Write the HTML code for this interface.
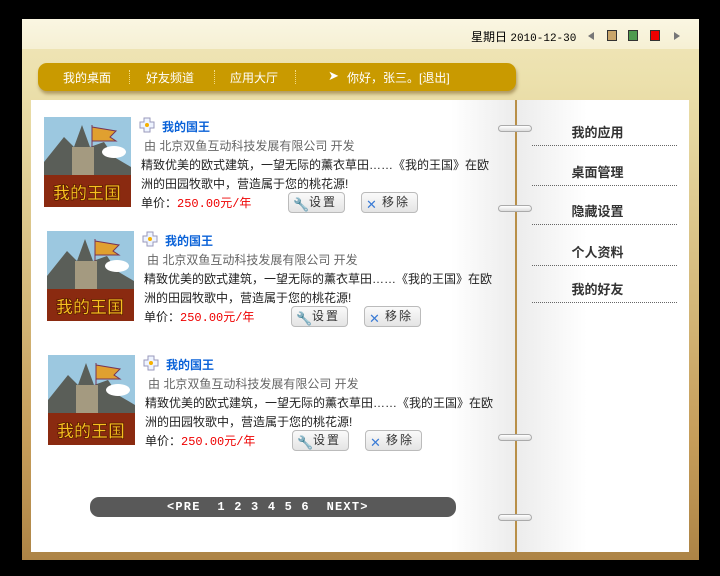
<!DOCTYPE html>
<html><head><meta charset="utf-8"><style>
*{margin:0;padding:0;box-sizing:border-box}
body{width:720px;height:576px;background:#000;position:relative;overflow:hidden;font-family:"Liberation Sans","Noto Sans CJK SC",sans-serif;font-size:12px}
.frame{position:absolute;left:22px;top:19px;width:677px;height:541px;background:linear-gradient(#f0e6bb 0,#ece1ad 60px,#dcc78c 200px,#c69d5a 420px,#ad8446 541px)}
.top{position:absolute;left:0;top:0;width:677px;height:30px;background:linear-gradient(#faf6e2,#f6f0d4)}
.date{position:absolute;left:449px;top:9px;font-size:12px;color:#000}
.date span{font-family:"Liberation Mono",monospace;font-size:11px}
.sq{position:absolute;top:11px;width:10px;height:11px;border:1px solid #333}
.tri{position:absolute;top:13px;width:0;height:0;border-top:4px solid transparent;border-bottom:4px solid transparent}
.nav{position:absolute;left:16px;top:44px;width:478px;height:28px;background:#c99a00;border-radius:9px;box-shadow:1px 3px 3px rgba(120,90,30,.5);color:#fff}
.nav span{position:absolute;top:6px;font-size:12px}
.nav i{position:absolute;top:7px;height:14px;border-left:1px dotted #f3dc86}
.lp{position:absolute;left:9px;top:81px;width:484px;height:452px;background:linear-gradient(90deg,#fff 0,#fff 420px,#ececec 484px)}
.bind{position:absolute;left:493px;top:81px;width:2px;height:452px;background:#b88f48}
.rp{position:absolute;left:495px;top:81px;width:172px;height:452px;background:linear-gradient(90deg,#ececec 0,#fff 70px)}
.ring{position:absolute;left:476px;width:34px;height:7px;border:1px solid #aaa;border-radius:4px;background:linear-gradient(#fff,#ddd)}
.item{position:absolute}
.img{position:absolute;left:0;top:0;width:87px;height:90px}
.plus{position:absolute;left:95px;top:0;width:16px;height:16px}
.t{position:absolute;left:118px;top:1px;color:#0a62d8;font-weight:bold;font-size:12px;white-space:nowrap}
.by{position:absolute;left:100px;top:20px;color:#666;white-space:nowrap}
.d{position:absolute;left:97px;top:39px;width:355px;color:#222;line-height:19px}
.pr{position:absolute;left:97px;top:77px;color:#222;white-space:nowrap}
.pr b{font-weight:normal;color:#e00;font-family:"Liberation Mono",monospace}
.btn{position:absolute;top:75px;width:57px;height:21px;border:1px solid #bbb;border-radius:4px;background:linear-gradient(#fafafa,#e4e4e4);color:#333;font-size:12px;line-height:19px;padding-left:20px;letter-spacing:2px}
.btn em{position:absolute;left:4px;top:2px;font-style:normal;font-size:13px;letter-spacing:0}
.pg{position:absolute;left:68px;top:478px;width:366px;height:20px;background:#595959;border-radius:9px;color:#fff;font-family:"Liberation Mono",monospace;font-size:12px;line-height:20px;white-space:pre;padding-left:77px;letter-spacing:1.2px;font-weight:bold}
.m{position:absolute;left:510px;width:145px;text-align:center;color:#333;font-weight:bold;font-size:13px;border-bottom:1px dotted #666;height:24px;padding-right:14px}
</style></head><body>
<div class="frame">
 <div class="top">
  <div class="date">星期日 <span>2010-12-30</span></div>
  <div class="tri" style="left:566px;border-right:6px solid #777"></div>
  <div class="sq" style="left:585px;background:#c9a66b"></div>
  <div class="sq" style="left:606px;background:#4f9a4f"></div>
  <div class="sq" style="left:628px;background:#e00"></div>
  <div class="tri" style="left:652px;border-left:6px solid #777"></div>
 </div>
 <div class="nav">
  <span style="left:25px">我的桌面</span><i style="left:91px"></i>
  <span style="left:108px">好友频道</span><i style="left:176px"></i>
  <span style="left:192px">应用大厅</span><i style="left:257px"></i>
  <span style="left:290px;font-size:13px;top:5px">&#10148;</span>
  <span style="left:309px">你好，张三。[退出]</span>
 </div>
 <div class="lp"></div><div class="bind"></div><div class="rp"></div>
 <div class="ring" style="top:106px"></div><div class="ring" style="top:186px"></div>
 <div class="ring" style="top:415px"></div><div class="ring" style="top:495px"></div>

 <div class="m" style="top:103px">我的应用</div>
 <div class="m" style="top:143px">桌面管理</div>
 <div class="m" style="top:182px">隐藏设置</div>
 <div class="m" style="top:223px">个人资料</div>
 <div class="m" style="top:260px">我的好友</div>

 <div class="pg">&lt;PRE  1 2 3 4 5 6  NEXT&gt;</div>
</div>

<div class="item" style="left:44px;top:117px">
 <svg class="img" viewBox="0 0 87 90"><rect width="87" height="90" fill="#9cc8e0"/><path d="M0 45 L20 20 L30 30 L38 8 L46 30 L60 25 L70 40 L87 50 L87 90 L0 90Z" fill="#5a5e58"/><rect x="28" y="30" width="22" height="30" fill="#a49a80"/><path d="M48 8 L48 30 M48 10 L72 14 L66 20 L72 24 L48 24" fill="#e0a030" stroke="#735" stroke-width="1"/><ellipse cx="70" cy="35" rx="12" ry="6" fill="#fff"/><rect y="58" width="87" height="32" fill="#8a2a10"/><text x="43" y="82" text-anchor="middle" font-size="17" font-weight="bold" fill="#f8c020" stroke="#5a1a00" stroke-width=".8" font-family="Noto Sans CJK SC">我的王国</text></svg>
 <svg class="plus" viewBox="0 0 16 16"><path d="M5 1h6v4h4v6h-4v4H5v-4H1V5h4z" fill="#eef4ff" stroke="#99b"/><circle cx="8" cy="8" r="2" fill="#f6b000"/></svg>
 <div class="t">我的国王</div>
 <div class="by">由 北京双鱼互动科技发展有限公司 开发</div>
 <div class="d">精致优美的欧式建筑，一望无际的薰衣草田……《我的王国》在欧洲的田园牧歌中，营造属于您的桃花源!</div>
 <div class="pr">单价：<b>250.00元/年</b></div>
 <div class="btn" style="left:244px"><em>🔧</em>设置</div>
 <div class="btn" style="left:317px"><em style="color:#3a7bd5">✕</em>移除</div>
</div>
<div class="item" style="left:47px;top:231px">
 <svg class="img" viewBox="0 0 87 90"><rect width="87" height="90" fill="#9cc8e0"/><path d="M0 45 L20 20 L30 30 L38 8 L46 30 L60 25 L70 40 L87 50 L87 90 L0 90Z" fill="#5a5e58"/><rect x="28" y="30" width="22" height="30" fill="#a49a80"/><path d="M48 8 L48 30 M48 10 L72 14 L66 20 L72 24 L48 24" fill="#e0a030" stroke="#735" stroke-width="1"/><ellipse cx="70" cy="35" rx="12" ry="6" fill="#fff"/><rect y="58" width="87" height="32" fill="#8a2a10"/><text x="43" y="82" text-anchor="middle" font-size="17" font-weight="bold" fill="#f8c020" stroke="#5a1a00" stroke-width=".8" font-family="Noto Sans CJK SC">我的王国</text></svg>
 <svg class="plus" viewBox="0 0 16 16"><path d="M5 1h6v4h4v6h-4v4H5v-4H1V5h4z" fill="#eef4ff" stroke="#99b"/><circle cx="8" cy="8" r="2" fill="#f6b000"/></svg>
 <div class="t">我的国王</div>
 <div class="by">由 北京双鱼互动科技发展有限公司 开发</div>
 <div class="d">精致优美的欧式建筑，一望无际的薰衣草田……《我的王国》在欧洲的田园牧歌中，营造属于您的桃花源!</div>
 <div class="pr">单价：<b>250.00元/年</b></div>
 <div class="btn" style="left:244px"><em>🔧</em>设置</div>
 <div class="btn" style="left:317px"><em style="color:#3a7bd5">✕</em>移除</div>
</div>
<div class="item" style="left:48px;top:355px">
 <svg class="img" viewBox="0 0 87 90"><rect width="87" height="90" fill="#9cc8e0"/><path d="M0 45 L20 20 L30 30 L38 8 L46 30 L60 25 L70 40 L87 50 L87 90 L0 90Z" fill="#5a5e58"/><rect x="28" y="30" width="22" height="30" fill="#a49a80"/><path d="M48 8 L48 30 M48 10 L72 14 L66 20 L72 24 L48 24" fill="#e0a030" stroke="#735" stroke-width="1"/><ellipse cx="70" cy="35" rx="12" ry="6" fill="#fff"/><rect y="58" width="87" height="32" fill="#8a2a10"/><text x="43" y="82" text-anchor="middle" font-size="17" font-weight="bold" fill="#f8c020" stroke="#5a1a00" stroke-width=".8" font-family="Noto Sans CJK SC">我的王国</text></svg>
 <svg class="plus" viewBox="0 0 16 16"><path d="M5 1h6v4h4v6h-4v4H5v-4H1V5h4z" fill="#eef4ff" stroke="#99b"/><circle cx="8" cy="8" r="2" fill="#f6b000"/></svg>
 <div class="t">我的国王</div>
 <div class="by">由 北京双鱼互动科技发展有限公司 开发</div>
 <div class="d">精致优美的欧式建筑，一望无际的薰衣草田……《我的王国》在欧洲的田园牧歌中，营造属于您的桃花源!</div>
 <div class="pr">单价：<b>250.00元/年</b></div>
 <div class="btn" style="left:244px"><em>🔧</em>设置</div>
 <div class="btn" style="left:317px"><em style="color:#3a7bd5">✕</em>移除</div>
</div>
</body></html>
